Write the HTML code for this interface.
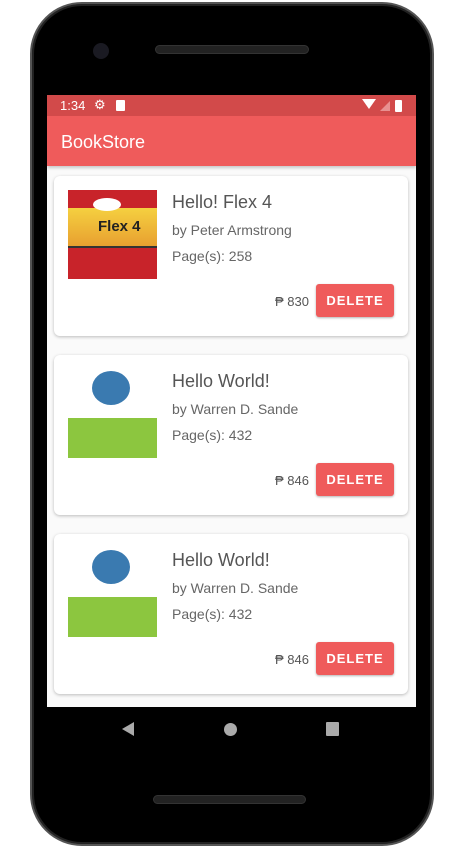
<!DOCTYPE html>
<html><head><meta charset="utf-8"><style>
*{margin:0;padding:0;box-sizing:border-box}
body{width:467px;height:864px;background:#fff;position:relative;overflow:hidden;font-family:"Liberation Sans",Roboto,sans-serif}
.phone{position:absolute;left:30px;top:2px;width:404px;height:844px;background:#000;border-radius:52px;border:2px solid #555;box-shadow:inset 0 0 0 2px #222}
.screen{position:absolute;left:47px;top:95px;width:369px;height:612px;background:#fafafa;overflow:hidden}
.status{height:21px;background:#d24a4a;color:#fff;font-size:13px;position:relative}
.appbar{height:50px;background:#ef5b5b;color:#fff;font-size:18px;padding:16px 0 0 14px;box-shadow:0 2px 3px rgba(0,0,0,.2)}
.card{position:absolute;left:7px;width:354px;height:160px;background:#fff;border-radius:6px;box-shadow:0 1px 3px rgba(0,0,0,.25)}
.img{position:absolute;left:14px;top:14px;width:89px;height:89px}
.t{position:absolute;left:118px;top:16px;font-size:18px;color:#555}
.a{position:absolute;left:118px;top:46px;font-size:14px;color:#666}
.p{position:absolute;left:118px;top:72px;font-size:14px;color:#666}
.pr{position:absolute;right:99px;top:118px;font-size:13px;color:#555}
.btn{position:absolute;left:262px;top:108px;width:78px;height:33px;background:#ef5b5b;color:#fff;border-radius:3px;font-size:13px;font-weight:bold;letter-spacing:1px;text-align:center;line-height:33px;box-shadow:0 1px 2px rgba(0,0,0,.3)}
.flex{background:#c8232a}
.world{background:linear-gradient(#fff 0,#fff 55%,#8cc63f 55%)}
</style></head><body>
<div class="phone"></div>
<div style="position:absolute;left:155px;top:45px;width:154px;height:9px;border-radius:5px;background:#222;border:1px solid #333"></div>
<div style="position:absolute;left:93px;top:43px;width:16px;height:16px;border-radius:50%;background:#1a1a22"></div>
<div style="position:absolute;left:153px;top:795px;width:153px;height:9px;border-radius:5px;background:#222;border:1px solid #333"></div>
<div style="position:absolute;left:122px;top:722px;width:0;height:0;border-top:7px solid transparent;border-bottom:7px solid transparent;border-right:12px solid #aaa"></div>
<div style="position:absolute;left:224px;top:723px;width:13px;height:13px;border-radius:50%;background:#aaa"></div>
<div style="position:absolute;left:326px;top:722px;width:13px;height:14px;background:#aaa;border-radius:1px"></div>
<div class="screen">
<div class="status"><span style="position:absolute;left:13px;top:3px">1:34</span>
<span style="position:absolute;left:47px;top:2px;font-size:13px">⚙</span>
<span style="position:absolute;left:69px;top:5px;width:9px;height:11px;background:#fff;border-radius:1px"></span>
<span style="position:absolute;right:14px;top:5px;width:7px;height:12px;background:#fff;border-radius:1px"></span>
<span style="position:absolute;right:26px;top:6px;width:0;height:0;border-left:10px solid transparent;border-bottom:10px solid #e89090"></span>
<span style="position:absolute;right:40px;top:4px;width:0;height:0;border-left:7px solid transparent;border-right:7px solid transparent;border-top:10px solid #fff"></span>
</div>
<div class="appbar">BookStore</div>
<div class="card" style="top:81px"><div class="img flex"><div style="position:absolute;left:0;top:18px;width:89px;height:40px;background:linear-gradient(#f5d040,#e8a030);border-bottom:2px solid #333;font-weight:bold;font-size:15px;color:#222;padding:10px 0 0 30px">Flex 4</div><div style="position:absolute;left:25px;top:8px;width:28px;height:13px;background:#fff;border-radius:50%"></div></div>
<div class="t">Hello! Flex 4</div><div class="a">by Peter Armstrong</div><div class="p">Page(s): 258</div><div class="pr">₱ 830</div><div class="btn">DELETE</div></div>
<div class="card" style="top:260px"><div class="img world"><div style="position:absolute;left:24px;top:2px;width:38px;height:34px;border-radius:50%;background:#3a7ab0"></div></div>
<div class="t">Hello World!</div><div class="a">by Warren D. Sande</div><div class="p">Page(s): 432</div><div class="pr">₱ 846</div><div class="btn">DELETE</div></div>
<div class="card" style="top:439px"><div class="img world"><div style="position:absolute;left:24px;top:2px;width:38px;height:34px;border-radius:50%;background:#3a7ab0"></div></div>
<div class="t">Hello World!</div><div class="a">by Warren D. Sande</div><div class="p">Page(s): 432</div><div class="pr">₱ 846</div><div class="btn">DELETE</div></div>
</div>
</body></html>
